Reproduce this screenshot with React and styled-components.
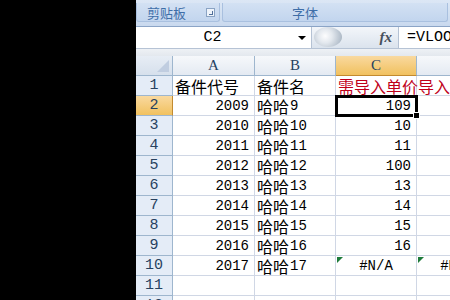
import React from "react";
import styled, { createGlobalStyle } from "styled-components";

const Global = createGlobalStyle`
  html, body { margin: 0; padding: 0; background: #000; }
  body { width: 450px; height: 300px; overflow: hidden; }
`;

const Screen = styled.div`
  display: flex;
  width: 450px;
  height: 300px;
  background: #000;
  overflow: hidden;
`;

const Blank = styled.div`
  width: 136px;
  flex: none;
`;

const Excel = styled.div`
  flex: 1;
  display: flex;
  flex-direction: column;
  background: #fff;
  min-width: 0;
  overflow: hidden;
`;

const Ribbon = styled.div`
  height: 27px;
  display: flex;
  flex-direction: column;
  background: linear-gradient(#dce7f5, #c9d9ee);
  border-bottom: 1px solid #8ba4c6;
  box-sizing: border-box;
`;

const RibbonTop = styled.div`
  height: 3px;
  display: flex;
`;

const LabelRow = styled.div`
  height: 19px;
  display: flex;
`;

const Group = styled.div`
  width: ${p => p.$w || "auto"};
  flex: ${p => (p.$w ? "none" : 1)};
  display: flex;
  align-items: center;
  justify-content: ${p => (p.$center ? "center" : "flex-start")};
  padding-left: ${p => (p.$center ? 0 : 10)}px;
  padding-right: ${p => (p.$center ? 60 : 0)}px;
  box-sizing: border-box;
  background: linear-gradient(#d3e1f3, #c2d5ee);
  border: 1px solid #a9c0df;
  border-top: none;
  border-radius: 0 0 3px 3px;
  margin-right: 2px;
  font-family: "Noto Sans CJK SC", sans-serif;
  font-size: 13px;
  color: #3f6ea8;
  gap: 20px;
`;

const Launcher = styled.span`
  width: 7px;
  height: 7px;
  border: 1px solid #8aa3c3;
  background: #eef3fa;
  position: relative;
  &::after {
    content: "";
    position: absolute;
    right: 1px;
    bottom: 1px;
    width: 3px;
    height: 3px;
    border-right: 1px solid #50709a;
    border-bottom: 1px solid #50709a;
  }
`;

const FormulaBar = styled.div`
  height: 21px;
  display: flex;
  align-items: stretch;
  background: #fff;
  border-bottom: 1px solid #b6c3d5;
`;

const NameBox = styled.div`
  width: 175px;
  flex: none;
  display: flex;
  align-items: center;
  font-family: "Liberation Mono", monospace;
  font-size: 15px;
  color: #000;
  position: relative;
  justify-content: center;
  padding-right: 22px;
  box-sizing: border-box;
`;

const DropArrow = styled.span`
  position: absolute;
  right: 5px;
  top: 9px;
  border-left: 4px solid transparent;
  border-right: 4px solid transparent;
  border-top: 4px solid #000;
`;

const FxZone = styled.div`
  width: 88px;
  flex: none;
  display: flex;
  align-items: center;
  justify-content: flex-end;
  padding-right: 6px;
  box-sizing: border-box;
  background: linear-gradient(#f3f6fa, #dbe3ed);
  border-left: 1px solid #b5c2d4;
  border-right: 1px solid #b5c2d4;
  position: relative;
`;

const Knob = styled.span`
  position: absolute;
  left: 2px;
  top: 0px;
  width: 28px;
  height: 20px;
  border-radius: 50%;
  background: radial-gradient(circle at 40% 45%, #fdfdfe 0, #e3e8ee 35%, #b7c2ce 75%, #9aa6b3 100%);
`;

const Fx = styled.span`
  font-family: "Liberation Serif", serif;
  font-style: italic;
  font-weight: bold;
  font-size: 15px;
  color: #47505c;
`;

const Input = styled.div`
  flex: 1;
  display: flex;
  align-items: center;
  padding-left: 8px;
  font-family: "Liberation Mono", monospace;
  font-size: 15px;
  white-space: nowrap;
  overflow: hidden;
`;

const Gap = styled.div`
  height: 7px;
  background: linear-gradient(#eef1f5, #e3e8ee);
`;

const Grid = styled.div`
  display: grid;
  grid-template-columns: 37px 82px 81px 81px 81px;
  grid-auto-rows: 20px;
  flex: 1;
  overflow: hidden;
`;

const Corner = styled.div`
  background: linear-gradient(#e7edf5, #d6e0ec);
  border-right: 1px solid #9eb6ce;
  border-bottom: 1px solid #9eb6ce;
  position: relative;
  &::after {
    content: "";
    position: absolute;
    right: 3px;
    bottom: 3px;
    border-left: 12px solid transparent;
    border-bottom: 12px solid #c0cde0;
  }
`;

const ColHead = styled.div`
  display: flex;
  align-items: center;
  justify-content: center;
  font-family: "Liberation Serif", serif;
  font-size: 15px;
  color: #27415f;
  background: ${p =>
    p.$active
      ? "linear-gradient(#f9d99f, #f1c15f)"
      : "linear-gradient(#f6f8fb, #e4eaf2)"};
  border-right: 1px solid #9eb6ce;
  border-bottom: 1px solid ${p => (p.$active ? "#c28a30" : "#9eb6ce")};
`;

const RowHead = styled.div`
  display: flex;
  align-items: center;
  justify-content: center;
  font-family: "Liberation Mono", monospace;
  font-size: 15px;
  color: #27415f;
  background: ${p => (p.$active ? "linear-gradient(#f9d99f, #f1c15f)" : "#e4ecf7")};
  border-right: 1px solid ${p => (p.$active ? "#c28a30" : "#9eb6ce")};
  border-bottom: 1px solid #9eb6ce;
`;

const Cell = styled.div`
  display: flex;
  align-items: center;
  justify-content: ${p => p.$align || "flex-start"};
  padding: 0 ${p => (p.$align === "flex-end" ? 5 : 2)}px;
  border-right: 1px solid #d0d7e5;
  border-bottom: 1px solid #d0d7e5;
  font-family: "Liberation Mono", "Noto Sans CJK SC", monospace;
  font-size: 14px;
  color: ${p => p.$color || "#000"};
  white-space: nowrap;
  position: relative;
  overflow: visible;
  z-index: ${p => (p.$over ? 2 : 1)};
  background: #fff;
  ${p => p.$selected && `
    outline: 3px solid #000;
    outline-offset: -2px;
    z-index: 3;
  `}
  ${p => p.$flag && `
    &::before {
      content: "";
      position: absolute;
      left: 1px;
      top: 1px;
      border-top: 6px solid #1e7b3a;
      border-right: 6px solid transparent;
    }
  `}
`;

const Han = styled.span`
  font-family: "Noto Sans CJK SC", sans-serif;
  font-size: 16px;
  line-height: 18px;
  margin-right: 1px;
`;

const Ascii = styled.span`
  line-height: 18px;
`;

const Handle = styled.span`
  position: absolute;
  right: -4px;
  bottom: -4px;
  width: 5px;
  height: 5px;
  background: #000;
  border: 1px solid #fff;
`;

const Text = ({ s }) =>
  s.split(/([\u4e00-\u9fff]+)/).filter(Boolean).map((part, i) =>
    /[\u4e00-\u9fff]/.test(part) ? <Han key={i}>{part}</Han> : <Ascii key={i}>{part}</Ascii>
  );

const rows = [
  [2009, "哈哈9", "109"],
  [2010, "哈哈10", "10"],
  [2011, "哈哈11", "11"],
  [2012, "哈哈12", "100"],
  [2013, "哈哈13", "13"],
  [2014, "哈哈14", "14"],
  [2015, "哈哈15", "15"],
  [2016, "哈哈16", "16"],
  [2017, "哈哈17", "#N/A"],
];

export default function App() {
  return (
    <Screen>
      <Global />
      <Blank />
      <Excel>
        <Ribbon>
          <RibbonTop />
          <LabelRow>
            <Group $w="84px">剪贴板<Launcher /></Group>
            <Group $center>字体</Group>
          </LabelRow>
        </Ribbon>
        <FormulaBar>
          <NameBox>
            C2
            <DropArrow />
          </NameBox>
          <FxZone>
            <Knob />
            <Fx>fx</Fx>
          </FxZone>
          <Input>=VLOOKUP(B2,</Input>
        </FormulaBar>
        <Gap />
        <Grid>
          <Corner />
          <ColHead>A</ColHead>
          <ColHead>B</ColHead>
          <ColHead $active>C</ColHead>
          <ColHead>D</ColHead>

          <RowHead>1</RowHead>
          <Cell><Text s="备件代号" /></Cell>
          <Cell><Text s="备件名" /></Cell>
          <Cell $color="#c0001a" $over><Text s="需导入单价导入" /></Cell>
          <Cell />

          {rows.map((r, i) => {
            const n = i + 2;
            const na = r[2] === "#N/A";
            return (
              <React.Fragment key={n}>
                <RowHead $active={n === 2}>{n}</RowHead>
                <Cell $align="flex-end">{r[0]}</Cell>
                <Cell><Text s={r[1]} /></Cell>
                <Cell $align={na ? "center" : "flex-end"} $flag={na} $selected={n === 2}>
                  {r[2]}
                  {n === 2 && <Handle />}
                </Cell>
                <Cell $flag={na} $align={na ? "center" : undefined}>{na ? "#N/A" : ""}</Cell>
              </React.Fragment>
            );
          })}

          <RowHead>11</RowHead>
          <Cell /><Cell /><Cell /><Cell />
          <RowHead>12</RowHead>
          <Cell /><Cell /><Cell /><Cell />
        </Grid>
      </Excel>
    </Screen>
  );
}
